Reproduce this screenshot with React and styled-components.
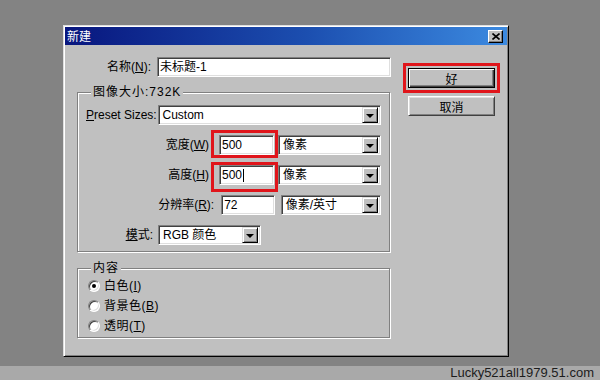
import styled, { createGlobalStyle } from 'styled-components';

const GlobalStyle = createGlobalStyle`
  html, body {
    margin: 0;
    padding: 0;
  }
  body {
    background: #838383;
    font-family: "Liberation Sans", "Noto Sans CJK SC", sans-serif;
    font-size: 12px;
    color: #000;
  }
`;

const Page = styled.div`
  display: flex;
  flex-direction: column;
  width: 600px;
  height: 380px;
  overflow: hidden;
`;

const Desktop = styled.div`
  height: 366px;
  box-sizing: border-box;
  padding: 25px 0 0 63px;
  background: #838383;
`;

const Watermark = styled.div`
  height: 14px;
  padding-right: 6px;
  background: #a9a9a9;
  color: #1c1c1c;
  font-size: 13px;
  line-height: 14px;
  text-align: right;
`;

const Dialog = styled.div`
  display: flex;
  flex-direction: column;
  width: 446px;
  height: 332px;
  box-sizing: border-box;
  padding: 1px;
  background: #c0c0c0;
  border: 1px solid;
  border-color: #dfdfdf #000 #000 #dfdfdf;
  box-shadow: inset 1px 1px 0 #fff, inset -1px -1px 0 #808080;
`;

const TitleBar = styled.div`
  display: flex;
  align-items: center;
  justify-content: space-between;
  height: 18px;
  padding: 0 4px 0 2px;
  background: linear-gradient(90deg, #08167e 0%, #1c4fb0 55%, #3c8ae0 100%);
  color: #fff;
  font-family: "Noto Sans CJK SC", sans-serif;
  font-size: 12px;
  line-height: 18px;
`;

const CloseButton = styled.div`
  display: flex;
  align-items: center;
  justify-content: center;
  width: 15px;
  height: 13px;
  box-sizing: border-box;
  background: #c0c0c0;
  border: 1px solid;
  border-color: #fff #000 #000 #fff;
  box-shadow: inset -1px -1px 0 #808080;
`;

const Body = styled.div`
  display: flex;
  gap: 12px;
  padding: 12px 7px 0 12px;
`;

const LeftColumn = styled.div`
  display: flex;
  flex-direction: column;
  width: 314px;
`;

const RightColumn = styled.div`
  display: flex;
  flex-direction: column;
  width: 97px;
  padding-top: 6px;
`;

const Row = styled.div`
  display: flex;
  align-items: center;
  height: 20px;
  gap: ${(p) => p.$gap || 0}px;
`;

const Label = styled.div`
  width: ${(p) => p.$w}px;
  box-sizing: border-box;
  padding-right: ${(p) => p.$pr || 0}px;
  text-align: ${(p) => p.$align || 'right'};
  white-space: nowrap;
  line-height: 16px;
`;

const Key = styled.u`
  text-decoration: underline;
  text-underline-offset: 1px;
`;

const Sunken = styled.div`
  display: flex;
  align-items: center;
  width: ${(p) => p.$w}px;
  height: 20px;
  box-sizing: border-box;
  background: #fff;
  border: 1px solid;
  border-color: #808080 #fff #fff #808080;
  box-shadow: inset 1px 1px 0 #404040, inset -1px -1px 0 #dfdfdf;
  padding: 2px 2px 2px ${(p) => p.$pl || 2}px;
  line-height: 16px;
  white-space: nowrap;
`;

const SelectText = styled.div`
  flex: 1;
`;

const DropButton = styled.div`
  display: flex;
  align-items: center;
  justify-content: center;
  width: 16px;
  height: 16px;
  box-sizing: border-box;
  background: #c0c0c0;
  border: 1px solid;
  border-color: #dfdfdf #000 #000 #dfdfdf;
  box-shadow: inset 1px 1px 0 #fff, inset -1px -1px 0 #808080;
`;

const Arrow = styled.span`
  width: 0;
  height: 0;
  border-left: 4px solid transparent;
  border-right: 4px solid transparent;
  border-top: 4px solid #000;
  margin-top: 1px;
`;

const Caret = styled.span`
  display: inline-block;
  width: 1px;
  height: 13px;
  margin-left: 1px;
  background: #000;
  vertical-align: -2px;
`;

const Highlight = styled.div`
  border: 3px solid #e0151b;
  padding: ${(p) => p.$pad};
  margin: ${(p) => p.$margin};
`;

const Group = styled.fieldset`
  width: 313px;
  min-width: 0;
  box-sizing: border-box;
  margin: ${(p) => p.$top}px 0 0;
  padding: 0 8px ${(p) => p.$bottom}px;
  border: 1px solid #808080;
  box-shadow: inset 1px 1px 0 #fff, 1px 1px 0 #fff;
`;

const Legend = styled.legend`
  margin-left: 5px;
  padding: 0 2px;
  background: #c0c0c0;
  font-size: 12px;
  line-height: 14px;
  letter-spacing: ${(p) => p.$spacing || 0}px;
`;

const Rows = styled.div`
  display: flex;
  flex-direction: column;
  gap: ${(p) => p.$gap}px;
  padding-top: ${(p) => p.$top}px;
`;

const Radio = styled.span`
  position: relative;
  width: 12px;
  height: 12px;
  margin-left: 2px;
  box-sizing: border-box;
  border-radius: 50%;
  background: #fff;
  border: 1px solid;
  border-color: #808080 #fff #fff #808080;
  box-shadow: inset 1px 1px 0 #404040, inset -1px -1px 0 #dfdfdf;

  &::after {
    content: '';
    display: ${(p) => (p.$checked ? 'block' : 'none')};
    position: absolute;
    left: 3px;
    top: 3px;
    width: 4px;
    height: 4px;
    border-radius: 50%;
    background: #000;
  }
`;

const RadioText = styled.span`
  line-height: 16px;
  letter-spacing: 0.5px;
`;

const Button = styled.div`
  display: flex;
  align-items: center;
  justify-content: center;
  width: 87px;
  height: 20px;
  box-sizing: border-box;
  margin: ${(p) => p.$margin || 0};
  background: #c0c0c0;
  border: 1px solid;
  border-color: ${(p) => (p.$default ? '#000' : '#fff #404040 #404040 #fff')};
  box-shadow: ${(p) =>
    p.$default
      ? 'inset 1px 1px 0 #fff, inset -1px -1px 0 #404040, inset -2px -2px 0 #808080'
      : 'inset 1px 1px 0 #dfdfdf, inset -1px -1px 0 #808080'};
  font-family: "Noto Sans CJK SC", sans-serif;
  font-size: 12px;
`;

const Select = ({ width, children }) => (
  <Sunken $w={width} $pl={4}>
    <SelectText>{children}</SelectText>
    <DropButton>
      <Arrow />
    </DropButton>
  </Sunken>
);

const App = () => (
  <Page>
    <GlobalStyle />
    <Desktop>
      <Dialog>
        <TitleBar>
          <span>新建</span>
          <CloseButton>
            <svg width="8" height="7" viewBox="0 0 8 7">
              <path d="M0.5 0.5 L7.5 6.5 M7.5 0.5 L0.5 6.5" stroke="#000" strokeWidth="1.6" />
            </svg>
          </CloseButton>
        </TitleBar>
        <Body>
          <LeftColumn>
            <Row>
              <Label $w={80} $pr={6}>
                名称(<Key>N</Key>):
              </Label>
              <Sunken $w={234}>未标题-1</Sunken>
            </Row>

            <Group $top={8} $bottom={6}>
              <Legend $spacing={1}>图像大小:732K</Legend>
              <Rows $top={6} $gap={10}>
                <Row>
                  <Label $w={72} $align="left">
                    <Key>P</Key>reset Sizes:
                  </Label>
                  <Select width={225}>Custom</Select>
                </Row>
                <Row>
                  <Label $w={125} $pr={2}>
                    宽度(<Key>W</Key>)
                  </Label>
                  <Highlight $pad="2px 1px 0 5px" $margin="-5px 0 -3px">
                    <Sunken $w={55}>500</Sunken>
                  </Highlight>
                  <Select width={103}>像素</Select>
                </Row>
                <Row>
                  <Label $w={125} $pr={2}>
                    高度(<Key>H</Key>)
                  </Label>
                  <Highlight $pad="0 1px 4px 5px" $margin="-3px 0 -7px">
                    <Sunken $w={55}>
                      500
                      <Caret />
                    </Sunken>
                  </Highlight>
                  <Select width={103}>像素</Select>
                </Row>
                <Row $gap={6}>
                  <Label $w={133} $pr={1}>
                    分辨率(<Key>R</Key>):
                  </Label>
                  <Sunken $w={55}>72</Sunken>
                  <Select width={103}>像素/英寸</Select>
                </Row>
                <Row>
                  <Label $w={72} $pr={5}>
                    <Key>模</Key>式:
                  </Label>
                  <Select width={103}>RGB 颜色</Select>
                </Row>
              </Rows>
            </Group>

            <Group $top={9} $bottom={1}>
              <Legend $spacing={1}>内容</Legend>
              <Rows $top={1} $gap={0}>
                <Row $gap={4}>
                  <Radio $checked />
                  <RadioText>
                    白色(<Key>I</Key>)
                  </RadioText>
                </Row>
                <Row $gap={4}>
                  <Radio />
                  <RadioText>
                    背景色(<Key>B</Key>)
                  </RadioText>
                </Row>
                <Row $gap={4}>
                  <Radio />
                  <RadioText>
                    透明(<Key>T</Key>)
                  </RadioText>
                </Row>
              </Rows>
            </Group>
          </LeftColumn>

          <RightColumn>
            <Highlight $pad="2px" $margin="0">
              <Button $default>好</Button>
            </Highlight>
            <Button $margin="3px 0 0 5px">取消</Button>
          </RightColumn>
        </Body>
      </Dialog>
    </Desktop>
    <Watermark>Lucky521all1979.51.com</Watermark>
  </Page>
);

export default App;
